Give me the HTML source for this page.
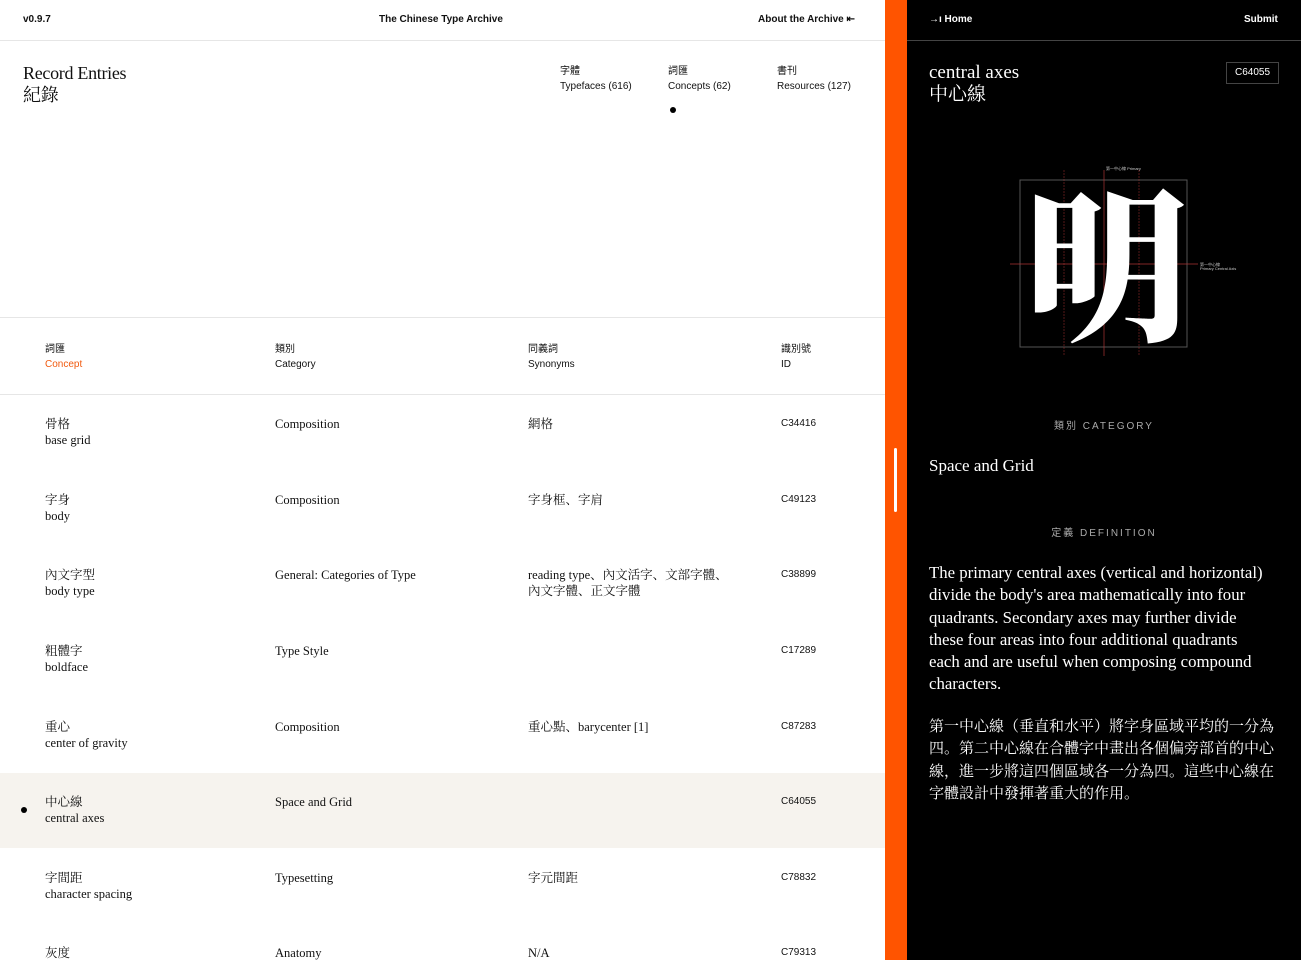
<!DOCTYPE html>
<html><head><meta charset="utf-8"><style>
*{margin:0;padding:0;box-sizing:border-box}
body{width:1301px;height:960px;overflow:hidden;background:#fff;position:relative;font-family:"Liberation Sans","Noto Sans CJK TC",sans-serif;color:#111}
.a{position:absolute;white-space:nowrap}
.s{font-family:"Liberation Serif","Noto Serif CJK SC",serif}
.sm{font-size:10px;font-weight:bold}
.hl{position:absolute;left:0;width:885px;height:1px;background:#e6e6e6}
.cell{position:absolute;font-size:12.5px;line-height:16px}
.id{position:absolute;font-size:10px;font-family:"Liberation Sans",sans-serif}
</style></head><body>
<div class="a sm" style="left:23px;top:14px">v0.9.7</div>
<div class="a sm" style="left:379px;top:14px">The Chinese Type Archive</div>
<div class="a sm" style="left:758px;top:14px">About the Archive ⇤</div>
<div class="hl" style="top:40px"></div>
<div class="a s" style="left:23px;top:62px;font-size:18px;line-height:22px;letter-spacing:-0.3px">Record Entries<br>紀錄</div>
<div class="a" style="left:560px;top:64px;font-size:10px;line-height:15px">字體<br>Typefaces (616)</div>
<div class="a" style="left:668px;top:64px;font-size:10px;line-height:15px">詞匯<br>Concepts (62)</div>
<div class="a" style="left:777px;top:64px;font-size:10px;line-height:15px">書刊<br>Resources (127)</div>
<div class="a" style="left:670px;top:107px;width:6px;height:6px;border-radius:3px;background:#000"></div>
<div class="hl" style="top:317px"></div>
<div class="a" style="left:45px;top:342px;font-size:10px;line-height:15px">詞匯<br><span style="color:#f15a0f">Concept</span></div>
<div class="a" style="left:275px;top:342px;font-size:10px;line-height:15px">類別<br>Category</div>
<div class="a" style="left:528px;top:342px;font-size:10px;line-height:15px">同義詞<br>Synonyms</div>
<div class="a" style="left:781px;top:342px;font-size:10px;line-height:15px">識別號<br>ID</div>
<div class="hl" style="top:394px"></div>
<div style="position:absolute;left:0;top:773px;width:885px;height:75px;background:#f6f3ee"></div>
<div class="a" style="left:21px;top:807px;width:6px;height:6px;border-radius:3px;background:#000"></div>
<div class="s">
<div class="cell" style="left:45px;top:416px">骨格<br>base grid</div><div class="cell" style="left:275px;top:416px">Composition</div><div class="cell" style="left:528px;top:416px">網格</div><div class="id" style="left:781px;top:418px">C34416</div>
<div class="cell" style="left:45px;top:492px">字身<br>body</div><div class="cell" style="left:275px;top:492px">Composition</div><div class="cell" style="left:528px;top:492px">字身框、字肩</div><div class="id" style="left:781px;top:494px">C49123</div>
<div class="cell" style="left:45px;top:567px">內文字型<br>body type</div><div class="cell" style="left:275px;top:567px">General: Categories of Type</div><div class="cell" style="left:528px;top:567px">reading type、內文活字、文部字體、<br>內文字體、正文字體</div><div class="id" style="left:781px;top:569px">C38899</div>
<div class="cell" style="left:45px;top:643px">粗體字<br>boldface</div><div class="cell" style="left:275px;top:643px">Type Style</div><div class="id" style="left:781px;top:645px">C17289</div>
<div class="cell" style="left:45px;top:719px">重心<br>center of gravity</div><div class="cell" style="left:275px;top:719px">Composition</div><div class="cell" style="left:528px;top:719px">重心點、barycenter [1]</div><div class="id" style="left:781px;top:721px">C87283</div>
<div class="cell" style="left:45px;top:794px">中心線<br>central axes</div><div class="cell" style="left:275px;top:794px">Space and Grid</div><div class="id" style="left:781px;top:796px">C64055</div>
<div class="cell" style="left:45px;top:870px">字間距<br>character spacing</div><div class="cell" style="left:275px;top:870px">Typesetting</div><div class="cell" style="left:528px;top:870px">字元間距</div><div class="id" style="left:781px;top:872px">C78832</div>
<div class="cell" style="left:45px;top:945px">灰度</div><div class="cell" style="left:275px;top:945px">Anatomy</div><div class="cell" style="left:528px;top:945px">N/A</div><div class="id" style="left:781px;top:947px">C79313</div>
</div>
<div style="position:absolute;left:885px;top:0;width:22px;height:960px;background:#ff5400"></div>
<div style="position:absolute;left:894px;top:448px;width:3px;height:64px;background:#fff;border-radius:2px"></div>
<div style="position:absolute;left:907px;top:0;width:394px;height:960px;background:#000;color:#fff">
<div class="a sm" style="left:22px;top:14px">→ı Home</div>
<div class="a sm" style="left:337px;top:14px">Submit</div>
<div style="position:absolute;left:0;top:40px;width:394px;height:1px;background:#444"></div>
<div class="a s" style="left:22px;top:62px;font-size:19px;line-height:22px">central axes<br>中心線</div>
<div class="a" style="left:319px;top:62px;width:53px;height:22px;border:1px solid #444;font-size:10px;text-align:center;line-height:20px">C64055</div>
<svg class="a" style="left:93px;top:150px" width="250" height="220" viewBox="1000 150 250 220">
<rect x="1020" y="180" width="167" height="167" fill="none" stroke="#555" stroke-width="1"/>
<line x1="1010" y1="264" x2="1198" y2="264" stroke="#a33" stroke-width=".7"/>
<line x1="1104" y1="170" x2="1104" y2="356" stroke="#a33" stroke-width=".7"/>
<line x1="1064" y1="170" x2="1064" y2="356" stroke="#a33" stroke-width=".5" stroke-dasharray="2 1"/>
<line x1="1139" y1="170" x2="1139" y2="356" stroke="#a33" stroke-width=".5" stroke-dasharray="2 1"/>
<text x="1106" y="328" font-size="165" fill="#fff" font-family="Noto Serif CJK SC,serif" font-weight="900" text-anchor="middle">明</text>
<text x="1200" y="266" font-size="4" fill="#ccc">第一中心線</text>
<text x="1200" y="270" font-size="4" fill="#ccc">Primary Central Axis</text>
<text x="1106" y="170" font-size="4" fill="#ccc">第一中心線 Primary</text>
</svg>
<div class="a" style="left:0;width:394px;text-align:center;top:417px;font-size:10px;letter-spacing:2px;color:#aaa">類別 CATEGORY</div>
<div class="a s" style="left:22px;top:456px;font-size:17px">Space and Grid</div>
<div class="a" style="left:0;width:394px;text-align:center;top:524px;font-size:10px;letter-spacing:2px;color:#aaa">定義 DEFINITION</div>
<div class="s" style="position:absolute;left:22px;top:562px;width:338px;font-size:16.8px;line-height:22.3px">The primary central axes (vertical and horizontal) divide the body's area mathematically into four quadrants. Secondary axes may further divide these four areas into four additional quadrants each and are useful when composing compound characters.</div>
<div class="s" style="position:absolute;left:22px;top:716px;width:354px;font-size:15px;line-height:22.3px">第一中心線（垂直和水平）將字身區域平均的一分為四。第二中心線在合體字中畫出各個偏旁部首的中心線，進一步將這四個區域各一分為四。這些中心線在字體設計中發揮著重大的作用。</div>
</div>
</body></html>
